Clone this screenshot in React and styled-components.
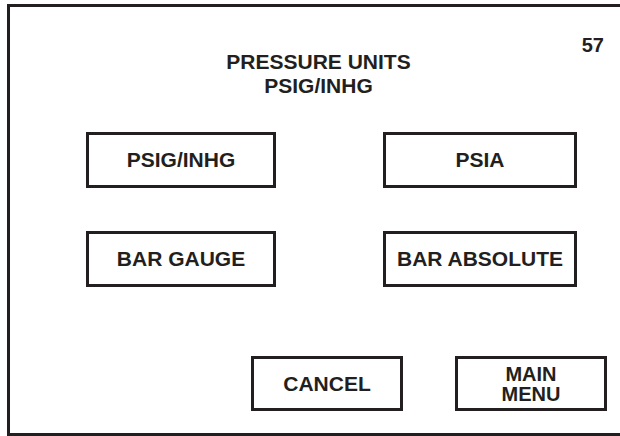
import React from "react";
import styled, { createGlobalStyle } from "styled-components";

const GlobalStyle = createGlobalStyle`
  html, body {
    margin: 0;
    padding: 0;
    background: #ffffff;
    overflow: hidden;
  }
  body {
    font-family: "Liberation Sans", Arial, Helvetica, sans-serif;
    color: #231f20;
  }
`;

const Page = styled.div`
  width: 620px;
  height: 436px;
  padding: 4px 0 0 7px;
  box-sizing: border-box;
  overflow: hidden;
`;

const Frame = styled.div`
  position: relative;
  width: 623px;
  height: 432px;
  box-sizing: border-box;
  border: 3px solid #231f20;
  display: flex;
  flex-direction: column;
  padding: 43px 20px 22px 0;
`;

const PageNumber = styled.div`
  position: absolute;
  top: 27px;
  right: 23px;
  font-size: 20px;
  line-height: 22px;
  font-weight: 700;
`;

const Title = styled.h1`
  margin: 0;
  text-align: center;
  font-size: 21px;
  line-height: 24px;
  font-weight: 700;
  padding-left: 20px;
`;

const Grid = styled.div`
  display: grid;
  grid-template-columns: 190px 194px;
  grid-auto-rows: 56px;
  column-gap: 107px;
  row-gap: 43px;
  margin-top: 34px;
  padding-left: 76px;
`;

const Button = styled.button`
  box-sizing: border-box;
  width: ${(p) => p.$w || "100%"};
  height: ${(p) => p.$h || "100%"};
  border: 3px solid #231f20;
  background: #ffffff;
  color: #231f20;
  font-family: "Liberation Sans", Arial, Helvetica, sans-serif;
  font-size: 21px;
  line-height: 24px;
  font-weight: 700;
  padding: 0;
  margin: 0;
  display: flex;
  align-items: center;
  justify-content: center;
  text-align: center;
  border-radius: 0;
`;

const Lines = styled.span`
  display: flex;
  flex-direction: column;
  align-items: center;
  font-size: 20px;
  line-height: 20px;
  margin-top: 1px;
`;

const BottomRow = styled.div`
  margin-top: auto;
  display: flex;
  justify-content: flex-end;
  gap: 52px;
`;

export default function App() {
  return (
    <>
      <GlobalStyle />
      <Page>
        <Frame>
          <PageNumber>57</PageNumber>
          <Title>
            PRESSURE UNITS
            <br />
            PSIG/INHG
          </Title>
          <Grid>
            <Button>PSIG/INHG</Button>
            <Button>PSIA</Button>
            <Button>BAR GAUGE</Button>
            <Button>BAR ABSOLUTE</Button>
          </Grid>
          <BottomRow>
            <Button $w="152px" $h="55px">CANCEL</Button>
            <Button $w="152px" $h="55px">
              <Lines>
                <span>MAIN</span>
                <span>MENU</span>
              </Lines>
            </Button>
          </BottomRow>
        </Frame>
      </Page>
    </>
  );
}
